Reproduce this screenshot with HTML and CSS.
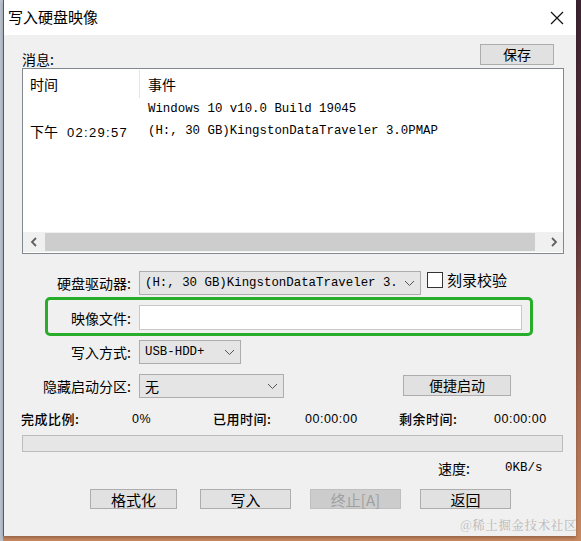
FILE: index.html
```html
<!DOCTYPE html>
<html lang="zh">
<head>
<meta charset="utf-8">
<link rel="stylesheet" href="styles.css">
</head>
<body>
<div class="desk">
  <div class="window">
    <div class="titlebar">
      <span class="title">写入硬盘映像</span>
      <svg class="close" width="14" height="14" viewBox="0 0 14 14"><path d="M1 1 L13 13 M13 1 L1 13" stroke="#111" stroke-width="1.2" fill="none"/></svg>
    </div>
    <div class="content">
      <div class="msgbar">
        <span class="msglabel">消息:</span>
        <button class="btn save">保存</button>
      </div>
      <div class="listbox">
        <div class="lhead">
          <div class="c1">时间</div>
          <div class="c2">事件</div>
        </div>
        <div class="lrow">
          <div class="c1"></div>
          <div class="c2 mono">Windows 10 v10.0 Build 19045</div>
        </div>
        <div class="lrow">
          <div class="c1"><span class="cjk">下午</span><span class="time">02:29:57</span></div>
          <div class="c2 mono">(H:, 30 GB)KingstonDataTraveler 3.0PMAP</div>
        </div>
        <div class="lspace"></div>
        <div class="hscroll">
          <span class="arrow aleft">
            <svg width="8" height="10" viewBox="0 0 8 10"><path d="M6 1 L2 5 L6 9" stroke="#606060" stroke-width="1.8" fill="none"/></svg>
          </span>
          <span class="thumb"></span>
          <span class="arrow aright">
            <svg width="8" height="10" viewBox="0 0 8 10"><path d="M2 1 L6 5 L2 9" stroke="#606060" stroke-width="1.8" fill="none"/></svg>
          </span>
        </div>
      </div>

      <div class="frow r1">
        <span class="flabel">硬盘驱动器:</span>
        <div class="select drive"><span class="mono sv">(H:, 30 GB)KingstonDataTraveler 3.</span><svg class="chev" width="11" height="7" viewBox="0 0 11 7"><path d="M1 1 L5.5 5.5 L10 1" stroke="#555" stroke-width="1" fill="none"/></svg></div>
        <label class="check"><span class="box"></span>刻录校验</label>
      </div>

      <div class="highlight">
        <div class="frow r2">
          <span class="flabel">映像文件:</span>
          <div class="input"></div>
        </div>
      </div>

      <div class="frow r3">
        <span class="flabel">写入方式:</span>
        <div class="select mode"><span class="mono sv">USB-HDD+</span><svg class="chev" width="11" height="7" viewBox="0 0 11 7"><path d="M1 1 L5.5 5.5 L10 1" stroke="#555" stroke-width="1" fill="none"/></svg></div>
      </div>

      <div class="frow r4">
        <span class="flabel">隐藏启动分区:</span>
        <div class="select hide"><span class="sv">无</span><svg class="chev" width="11" height="7" viewBox="0 0 11 7"><path d="M1 1 L5.5 5.5 L10 1" stroke="#555" stroke-width="1" fill="none"/></svg></div>
        <button class="btn quick">便捷启动</button>
      </div>

      <div class="status">
        <span class="slabel s1">完成比例:</span>
        <span class="sval v1">0%</span>
        <span class="slabel s2">已用时间:</span>
        <span class="sval v2">00:00:00</span>
        <span class="slabel s3">剩余时间:</span>
        <span class="sval v3">00:00:00</span>
      </div>

      <div class="progress"></div>

      <div class="speed">
        <span class="splabel">速度:</span>
        <span class="mono spval">0KB/s</span>
      </div>

      <div class="actions">
        <button class="btn act a1">格式化</button>
        <button class="btn act">写入</button>
        <button class="btn act disabled">终止[A]</button>
        <button class="btn act">返回</button>
      </div>
      <div class="watermark">@稀土掘金技术社区</div>
    </div>
  </div>
</div>
</body>
</html>
```
FILE: styles.css
```css
* { box-sizing: border-box; }
html, body { margin: 0; padding: 0; }
body {
  width: 581px;
  height: 541px;
  overflow: hidden;
  background: linear-gradient(180deg, #3a2330 0%, #5a3038 40%, #a8694f 75%, #c88860 100%);
  font-family: "Noto Sans CJK SC", "Microsoft YaHei", sans-serif;
  color: #000;
}
.desk {
  height: 541px;
  background: linear-gradient(90deg, #b9c2cc 0, #b9c2cc 3px, transparent 3px);
}
.window {
  margin-left: 3px;
  width: 573px;
  height: 536px;
  background: #f0f0f0;
  border-left: 1px solid #5a5a5a;
  box-shadow: 0 2px 3px rgba(0,0,0,0.25);
}
.titlebar {
  height: 35px;
  background: #fff;
  display: flex;
  align-items: center;
  justify-content: space-between;
  padding: 0 12px 0 4px;
}
.title {
  font-size: 15px;
  line-height: 18px;
  margin-top: -1px;
}

.content {
  padding-left: 18px;
}
.msgbar {
  height: 33px;
  display: flex;
  justify-content: space-between;
  align-items: flex-start;
  width: 532px;
}
.msglabel {
  font-size: 14px;
  line-height: 16px;
  margin-top: 16px;
}
.btn {
  font-family: "Noto Sans CJK SC", sans-serif;
  font-size: 14px;
  background: #e1e1e1;
  border: 1px solid #adadad;
  padding: 0;
  color: #000;
  line-height: 17px;
}
.save {
  width: 74px;
  height: 21px;
  margin-top: 9px;
}
.listbox {
  width: 542px;
  height: 186px;
  background: #fff;
  border: 1px solid #828790;
  display: flex;
  flex-direction: column;
}
.lhead {
  display: flex;
  height: 30px;
  font-size: 14px;
  align-items: center;
}
.lhead .c1 { border-right: 1px solid #e5e5e5; height: 28px; line-height: 28px; }
.c1 { width: 117px; padding-left: 7px; flex: none; white-space: nowrap; }
.c2 { padding-left: 8px; white-space: nowrap; }
.lrow {
  display: flex;
  height: 22px;
  align-items: center;
  font-size: 14px;
}
.lrow:nth-child(2) { margin-top: -1px; }
.mono {
  font-family: "Liberation Mono", "DejaVu Sans Mono", monospace;
  font-size: 12.4px;
}
.time {
  font-family: "Liberation Sans", sans-serif;
  font-size: 13px;
  letter-spacing: 1.3px;
  margin-left: 9px;
}
.lspace { flex: 1; }
.hscroll {
  height: 20px;
  display: flex;
  align-items: center;
  margin-bottom: 1px;
  background: #f0f0f0;
}
.arrow {
  height: 20px;
  display: flex;
  align-items: center;
  justify-content: center;
  flex: none;
}
.aleft { width: 22px; }
.aright { width: 18px; margin-left: 10px; }
.thumb {
  flex: 1;
  height: 18px;
  background: #cdcdcd;
}

.frow {
  display: flex;
  align-items: center;
  font-size: 14px;
}
.flabel {
  width: 111px;
  text-align: right;
  padding-right: 2px;
  flex: none;
  white-space: nowrap;
}
.r1 { margin-top: 17px; height: 24px; }
.select {
  height: 24px;
  background: #e5e5e5;
  border: 1px solid #adadad;
  display: flex;
  align-items: center;
  justify-content: space-between;
  padding: 0 5px;
  margin-left: 6px;
  flex: none;
}
.sv { white-space: nowrap; overflow: hidden; }
.drive { width: 282px; }
.mode { width: 102px; }
.hide { width: 145px; }
.chev { flex: none; }
.check {
  display: flex;
  align-items: center;
  margin-left: 6px;
  margin-top: -7px;
  font-size: 15px;
}
.box {
  width: 16px;
  height: 16px;
  border: 1px solid #333;
  background: #fff;
  margin-right: 4px;
}
.highlight {
  margin-left: 23px;
  margin-top: 2px;
  width: 488px;
  height: 39px;
  border: 3px solid #27ad2a;
  border-radius: 5px;
  display: flex;
  align-items: center;
}
.r2 { margin-left: -26px; margin-top: 2px; }
.input {
  width: 383px;
  height: 25px;
  background: #fff;
  border: 1px solid #c8c8c8;
  margin-left: 6px;
}
.r3 { margin-top: 4px; height: 24px; }
.r4 { margin-top: 10px; height: 24px; }
.quick {
  width: 108px;
  height: 21px;
  margin-left: 119px;
  margin-top: -2px;
}
.status {
  display: flex;
  align-items: center;
  height: 17px;
  margin-top: 12px;
  font-size: 13px;
  white-space: nowrap;
}
.slabel { font-weight: 500; letter-spacing: 0.5px; }
.sval { font-family: "Liberation Sans", sans-serif; font-size: 12.5px; letter-spacing: 0.5px; }
.s1 { width: 111px; margin-left: -1px; }
.v1 { width: 81px; }
.s2 { width: 92px; }
.v2 { width: 94px; }
.s3 { width: 95px; }
.progress {
  width: 541px;
  height: 17px;
  margin-top: 8px;
  background: #e6e6e6;
  border: 1px solid #bcbcbc;
}
.speed {
  display: flex;
  align-items: center;
  height: 18px;
  margin-top: 7px;
  font-size: 14px;
}
.splabel { margin-left: 416px; width: 67px; }
.spval { font-size: 12.5px; }
.actions {
  display: flex;
  margin-top: 12px;
  margin-left: 68px;
  gap: 19px;
}
.act {
  width: 91px;
  height: 20px;
  font-size: 15px;
  line-height: 17px;
}
.a1 { width: 87px; margin-right: 4px; }
.disabled {
  background: #cccccc;
  border-color: #bfbfbf;
  color: #a0a0a0;
}
.watermark {
  font-size: 12.5px;
  color: #b8b8b8;
  text-align: right;
  width: 555px;
  margin-top: 7px;
  letter-spacing: 0.6px;
  white-space: nowrap;
  font-family: "Noto Serif CJK SC", "Noto Sans CJK SC", serif;
}
```
